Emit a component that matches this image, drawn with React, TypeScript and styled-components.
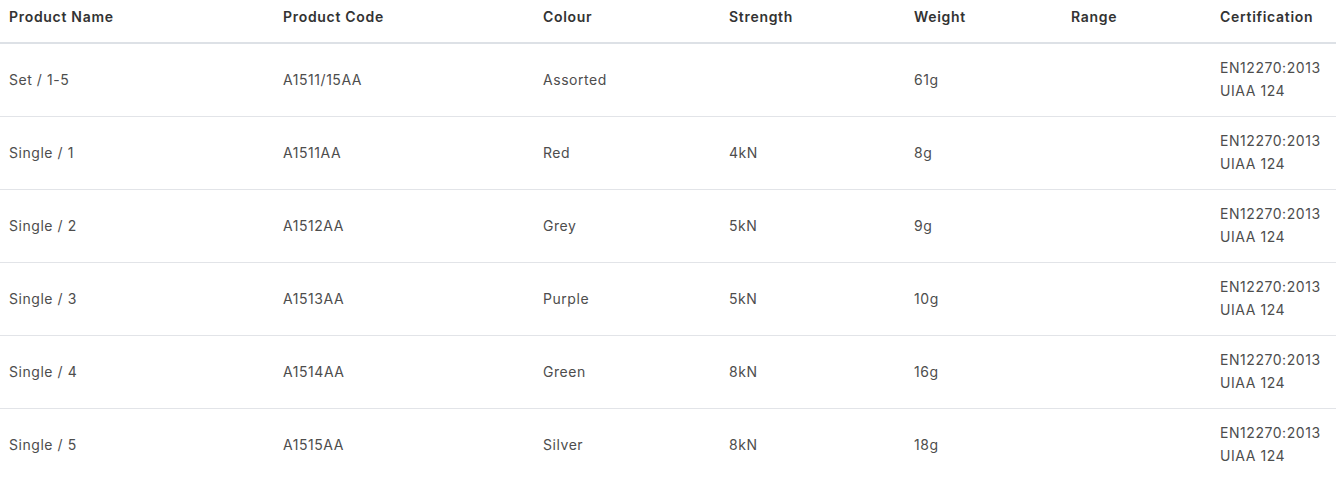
import React from "react";
import styled, { createGlobalStyle } from "styled-components";

const Global = createGlobalStyle`
  html, body { margin: 0; padding: 0; background: #fff; }
  body { font-family: "Inter", "Open Sans", sans-serif; }
`;

const Table = styled.table`
  width: 1336px;
  border-collapse: collapse;
  table-layout: fixed;
  font-size: 14px;
  color: #4d4d4d;
`;

const HeadCell = styled.th<{ $w: number }>`
  width: ${(p) => p.$w}px;
  text-align: left;
  font-weight: 600;
  color: #333;
  height: 43px;
  padding: 0 9px 9px;
  vertical-align: middle;
  border-bottom: 2px solid #dde1e6;
  letter-spacing: 0.7px;
  box-sizing: border-box;
`;

const Row = styled.tr`
  border-bottom: 1px solid #e2e4e8;
  &:last-child { border-bottom: none; }
`;

const Cell = styled.td`
  height: 70px;
  padding: 0 9px 2px;
  vertical-align: middle;
  line-height: 23px;
  font-weight: 400;
  letter-spacing: 0.55px;
  white-space: nowrap;
`;

const cols = [
  { label: "Product Name", w: 274 },
  { label: "Product Code", w: 260 },
  { label: "Colour", w: 186 },
  { label: "Strength", w: 185 },
  { label: "Weight", w: 157 },
  { label: "Range", w: 149 },
  { label: "Certification", w: 125 },
];

const rows = [
  ["Set / 1-5", "A1511/15AA", "Assorted", "", "61g", ""],
  ["Single / 1", "A1511AA", "Red", "4kN", "8g", ""],
  ["Single / 2", "A1512AA", "Grey", "5kN", "9g", ""],
  ["Single / 3", "A1513AA", "Purple", "5kN", "10g", ""],
  ["Single / 4", "A1514AA", "Green", "8kN", "16g", ""],
  ["Single / 5", "A1515AA", "Silver", "8kN", "18g", ""],
];

export default function App() {
  return (
    <>
      <Global />
      <Table>
        <thead>
          <tr>
            {cols.map((c) => (
              <HeadCell key={c.label} $w={c.w}>{c.label}</HeadCell>
            ))}
          </tr>
        </thead>
        <tbody>
          {rows.map((r, i) => (
            <Row key={i}>
              {r.map((v, j) => (
                <Cell key={j}>{v}</Cell>
              ))}
              <Cell>
                EN12270:2013
                <br />
                UIAA 124
              </Cell>
            </Row>
          ))}
        </tbody>
      </Table>
    </>
  );
}
